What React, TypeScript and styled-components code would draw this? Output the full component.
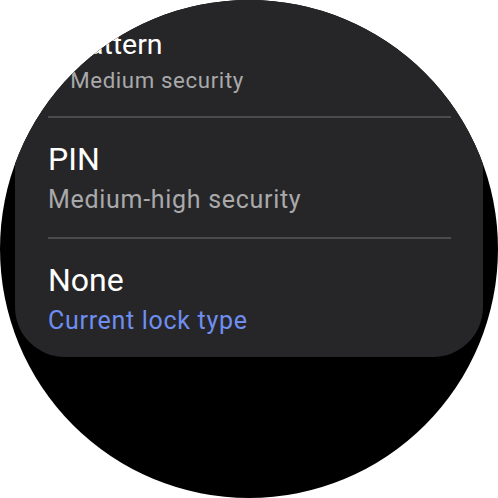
import styled, { createGlobalStyle } from "styled-components";

const GlobalStyle = createGlobalStyle`
  html, body {
    margin: 0;
    padding: 0;
    background: #ffffff;
  }
  body {
    font-family: Roboto, "Noto Sans", sans-serif;
  }
`;

const Watch = styled.div`
  width: 498px;
  height: 498px;
  border-radius: 50%;
  background: #000000;
  overflow: hidden;
  display: flex;
  flex-direction: column;
`;

// list is scrolled a bit, so the first row sits under the top edge
const Card = styled.div`
  margin: -3px 15px 0;
  background: #262628;
  border-radius: 0 0 50px 50px;
  display: flex;
  flex-direction: column;
`;

const Item = styled.div`
  padding: 0 32px 0 33px;
  display: flex;
  flex-direction: column;
`;

interface ItemBodyProps {
  // rows near the round edge shrink a little
  readonly $scale: number;
  readonly $last: boolean;
}

const ItemBody = styled.div<ItemBodyProps>`
  padding: 22px 0 ${(p) => (p.$last ? 21 : 22)}px;
  display: flex;
  flex-direction: column;
  gap: 7px;
  transform: scale(${(p) => p.$scale});
  transform-origin: 50% 99px;
`;

const Title = styled.div`
  color: #ffffff;
  font-size: 32px;
  line-height: 38px;
`;

const Subtitle = styled.div<{ $accent?: boolean }>`
  color: ${(p) => (p.$accent ? "#6f8ef0" : "#a9a9ab")};
  font-size: 25px;
  line-height: 30px;
  letter-spacing: 0.7px;
`;

const Divider = styled.div`
  height: 2px;
  background: #4b4b4d;
`;

const options = [
  { title: "Pattern", subtitle: "Medium security", scale: 0.89 },
  { title: "PIN", subtitle: "Medium-high security", scale: 1 },
  { title: "None", subtitle: "Current lock type", scale: 1, current: true },
];

export default function App() {
  return (
    <>
      <GlobalStyle />
      <Watch>
        <Card>
          {options.map((o, i) => {
            const last = i === options.length - 1;
            return (
              <Item key={o.title}>
                <ItemBody $scale={o.scale} $last={last}>
                  <Title>{o.title}</Title>
                  <Subtitle $accent={o.current}>{o.subtitle}</Subtitle>
                </ItemBody>
                {!last && <Divider />}
              </Item>
            );
          })}
        </Card>
      </Watch>
    </>
  );
}
